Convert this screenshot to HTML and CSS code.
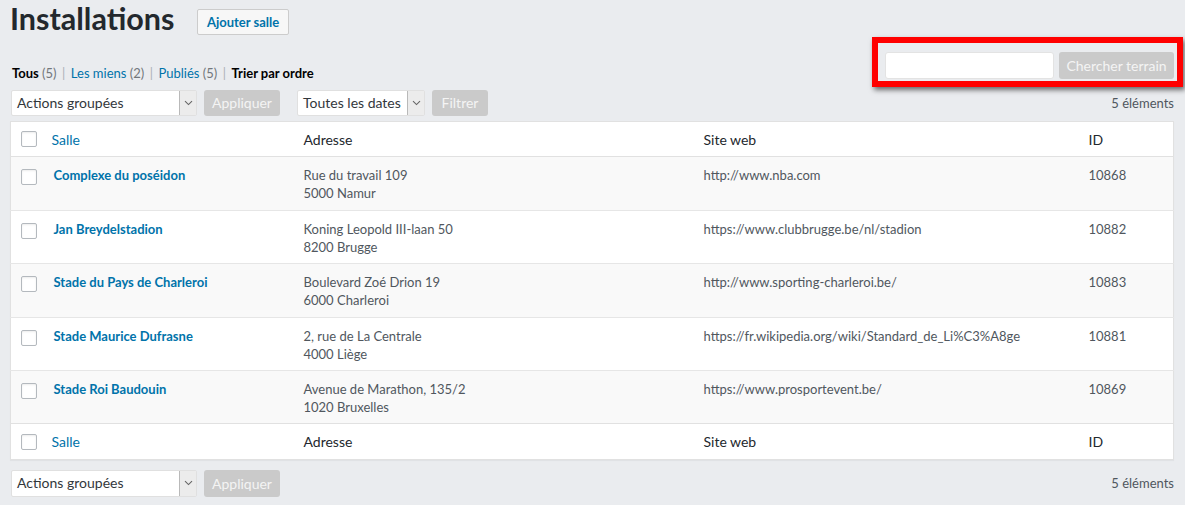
FILE: index.html
```html
<!DOCTYPE html>
<html lang="fr">
<head>
<meta charset="utf-8">
<title>Installations</title>
<link rel="stylesheet" href="styles.css">
</head>
<body>
<div class="wrap">
  <div class="head">
    <h1 class="title">Installations</h1>
    <a class="add-btn" href="#">Ajouter salle</a>
  </div>

  <div class="filters-row">
    <ul class="subsubsub">
      <li><b class="current">Tous</b> <span class="count">(5)</span></li>
      <li class="sep">|</li>
      <li><a href="#">Les miens</a> <span class="count">(2)</span></li>
      <li class="sep">|</li>
      <li><a href="#">Publiés</a> <span class="count">(5)</span></li>
      <li class="sep">|</li>
      <li><b class="current">Trier par ordre</b></li>
    </ul>
    <div class="search-box">
      <input class="search-input" type="search" aria-label="Chercher terrain">
      <span class="btn-disabled search-btn">Chercher terrain</span>
      <div class="highlight"></div>
    </div>
  </div>

  <div class="tablenav">
    <div class="actions">
      <div class="select sel-bulk"><span class="sel-text">Actions groupées</span><span class="sel-arrow"><svg width="9" height="6" viewBox="0 0 9 6"><path d="M1 1.2 L4.5 4.6 L8 1.2" fill="none" stroke="#666" stroke-width="1.1"/></svg></span></div>
      <span class="btn-disabled btn-apply">Appliquer</span>
      <div class="select sel-date"><span class="sel-text">Toutes les dates</span><span class="sel-arrow"><svg width="9" height="6" viewBox="0 0 9 6"><path d="M1 1.2 L4.5 4.6 L8 1.2" fill="none" stroke="#666" stroke-width="1.1"/></svg></span></div>
      <span class="btn-disabled btn-filter">Filtrer</span>
    </div>
    <div class="count-items">5 éléments</div>
  </div>

  <table class="list">
    <colgroup>
      <col class="c-cb"><col class="c-title"><col class="c-addr"><col class="c-site"><col class="c-id">
    </colgroup>
    <thead>
      <tr><th class="cb"><span class="checkbox"></span></th><th><a href="#">Salle</a></th><th>Adresse</th><th>Site web</th><th>ID</th></tr>
    </thead>
    <tbody>
      <tr class="alt h54"><td class="cb"><span class="checkbox"></span></td><td><a class="row-title" href="#">Complexe du poséidon</a></td><td>Rue du travail 109<br>5000 Namur</td><td>http://www.nba.com</td><td>10868</td></tr>
      <tr class="h53"><td class="cb"><span class="checkbox"></span></td><td><a class="row-title" href="#">Jan Breydelstadion</a></td><td>Koning Leopold III-laan 50<br>8200 Brugge</td><td>https://www.clubbrugge.be/nl/stadion</td><td>10882</td></tr>
      <tr class="alt h54"><td class="cb"><span class="checkbox"></span></td><td><a class="row-title" href="#">Stade du Pays de Charleroi</a></td><td>Boulevard Zoé Drion 19<br>6000 Charleroi</td><td>http://www.sporting-charleroi.be/</td><td>10883</td></tr>
      <tr class="h53"><td class="cb"><span class="checkbox"></span></td><td><a class="row-title" href="#">Stade Maurice Dufrasne</a></td><td>2, rue de La Centrale<br>4000 Liège</td><td>https://fr.wikipedia.org/wiki/Standard_de_Li%C3%A8ge</td><td>10881</td></tr>
      <tr class="alt h53"><td class="cb"><span class="checkbox"></span></td><td><a class="row-title" href="#">Stade Roi Baudouin</a></td><td>Avenue de Marathon, 135/2<br>1020 Bruxelles</td><td>https://www.prosportevent.be/</td><td>10869</td></tr>
    </tbody>
    <tfoot>
      <tr><th class="cb"><span class="checkbox"></span></th><th><a href="#">Salle</a></th><th>Adresse</th><th>Site web</th><th>ID</th></tr>
    </tfoot>
  </table>

  <div class="tablenav bottom">
    <div class="actions">
      <div class="select sel-bulk"><span class="sel-text">Actions groupées</span><span class="sel-arrow"><svg width="9" height="6" viewBox="0 0 9 6"><path d="M1 1.2 L4.5 4.6 L8 1.2" fill="none" stroke="#666" stroke-width="1.1"/></svg></span></div>
      <span class="btn-disabled btn-apply">Appliquer</span>
    </div>
    <div class="count-items">5 éléments</div>
  </div>
</div>
</body>
</html>
```

FILE: styles.css
```css
* { box-sizing: border-box; }
html, body { margin: 0; padding: 0; }
body {
  background: #eaecef;
  font-family: Lato, "Noto Sans", sans-serif;
  font-size: 13px;
  color: #50575e;
  width: 1185px;
  height: 505px;
  overflow: hidden;
}
a { color: #0073aa; text-decoration: none; }

.wrap { padding: 0 11px 0 10px; }

.head { display: flex; align-items: flex-start; height: 36px; }
.title {
  margin: 0;
  font-size: 30.5px;
  line-height: 36px;
  font-weight: 700;
  color: #23282d;
}
.add-btn {
  margin: 9px 0 0 23px;
  height: 26px;
  line-height: 24px;
  padding: 0 8.5px;
  border: 1px solid #ccc;
  border-radius: 2px;
  background: #f7f7f7;
  font-weight: 700;
  font-size: 13px;
  color: #0073aa;
}

.filters-row { display: flex; justify-content: space-between; align-items: flex-start; height: 54px; }
.subsubsub {
  list-style: none; margin: 28px 0 0 2px; padding: 0;
  display: flex; gap: 5px; line-height: 18px; font-size: 13px;
}
.subsubsub .current { color: #000; font-weight: 700; }
.subsubsub .count { color: #72777c; }
.subsubsub .sep { color: #aab0b6; margin: 0 0.5px; }

.search-box { position: relative; display: flex; gap: 5px; margin-top: 16px; }
.search-input {
  width: 169px; height: 27px; margin: 0;
  border: 1px solid #e3e3e3; border-radius: 3px; background: #fff;
  font: inherit; outline: none;
}
.highlight {
  position: absolute;
  left: -13px; top: -15px; right: -9px; bottom: -8px;
  border: 6px solid #ff0000;
  box-shadow: 2px 3px 5px rgba(0,0,0,0.55);
  pointer-events: none;
}

.btn-disabled {
  display: inline-block;
  height: 26px; line-height: 26px;
  padding: 0 10px;
  border-radius: 3px;
  background: #cacaca;
  color: #f4f4f4;
  font-size: 14px;
}
.search-btn { width: 115px; height: 27px; line-height: 27px; text-align: center; padding: 0; }

.tablenav { display: flex; justify-content: space-between; align-items: center; height: 26px; }
.actions { display: flex; align-items: center; }
.select {
  display: flex; height: 26px;
  background: #fff;
  border: 1px solid #e0e0e0;
  border-radius: 2px;
  font-size: 14px; color: #32373c;
}
.sel-text { flex: 1; padding-left: 5px; line-height: 24px; white-space: nowrap; }
.sel-arrow {
  width: 17px; background: #ececec;
  border-left: 1px solid #b9b9b9;
  display: flex; align-items: center; justify-content: center;
}
.sel-bulk { width: 186px; margin-left: 1px; }
.btn-apply { margin-left: 7px; width: 76px; text-align: center; padding: 0; }
.sel-date { width: 128px; margin-left: 17px; }
.btn-filter { margin-left: 7px; width: 56px; text-align: center; padding: 0; }
.count-items { color: #50575e; font-size: 13px; }

table.list {
  margin-top: 5px;
  width: 1164px;
  border-collapse: collapse;
  table-layout: fixed;
  background: #fff;
  border: 1px solid #e1e1e1;
  box-shadow: 0 1px 1px rgba(0,0,0,0.04);
}
.c-cb { width: 31px; }
.c-title { width: 252px; }
.c-addr { width: 400px; }
.c-site { width: 385px; }

table.list th {
  text-align: left; font-weight: 400;
  font-size: 14px; color: #23282d;
  padding: 0 10px; height: 35px;
  vertical-align: middle;
}
table.list thead tr { border-bottom: 1px solid #e1e1e1; }
table.list tfoot tr { border-top: 1px solid #e1e1e1; }
table.list tfoot th { height: 36px; }
table.list td {
  padding: 9px 10px 0;
  line-height: 18px;
  vertical-align: top;
  font-size: 13px; color: #50575e;
  white-space: nowrap;
}
table.list tr.h54 td { height: 54px; }
table.list tr.h53 td { height: 53px; }
table.list tbody tr { border-top: 1px solid #e6e6e6; }
table.list tr.alt { background: #f9f9f9; }
.row-title { font-weight: 700; margin-left: 2px; font-size: 13px; }

th.cb, td.cb { padding: 0 0 0 10px !important; }
td.cb { padding-top: 12px !important; }
th.cb { vertical-align: middle; }
.checkbox {
  display: block; width: 16px; height: 16px;
  border: 1px solid #b4b9be; border-radius: 2px; background: #fff;
  box-shadow: inset 0 1px 2px rgba(0,0,0,0.08);
}

.tablenav.bottom { margin-top: 9px; height: 28px; }
.tablenav.bottom .select { height: 27px; }
.tablenav.bottom .btn-disabled { height: 27px; line-height: 27px; }
```
